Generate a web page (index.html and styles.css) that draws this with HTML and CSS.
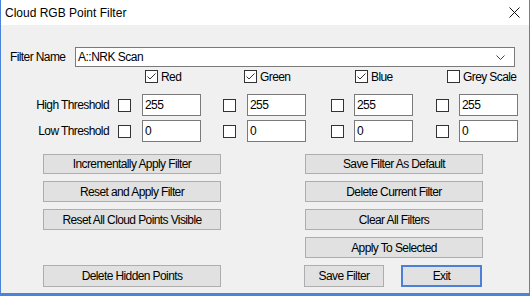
FILE: index.html
```html
<!DOCTYPE html>
<html lang="en">
<head>
    <meta charset="UTF-8">
    <title>Cloud RGB Point Filter</title>
    <link rel="stylesheet" href="styles.css">
</head>
<body>
    <div class="window">
        <!-- title bar -->
        <div class="titlebar">
            <span class="title">Cloud RGB Point Filter</span>
            <svg class="close" width="11" height="11" viewBox="0 0 11 11">
                <path d="M0.5 0.5 L10.5 10.5 M10.5 0.5 L0.5 10.5" stroke="#111" stroke-width="1" fill="none"/>
            </svg>
        </div>

        <div class="content">
            <!-- filter name -->
            <div class="name-row">
                <span class="name-label">Filter Name</span>
                <div class="combo">
                    <span>A::NRK Scan</span>
                    <svg width="9" height="5" viewBox="0 0 9 5">
                        <path d="M0.5 0.5 L4.5 4.5 L8.5 0.5" stroke="#444" stroke-width="1" fill="none"/>
                    </svg>
                </div>
            </div>

            <!-- channel checkboxes -->
            <div class="channels">
                <label class="channel ch-red"><span class="chk checked"><svg width="11" height="11" viewBox="0 0 11 11"><path d="M1.5 5.5 L4 8 L9.5 2.5" stroke="#333" stroke-width="1" fill="none"/></svg></span>Red</label>
                <label class="channel ch-green"><span class="chk checked"><svg width="11" height="11" viewBox="0 0 11 11"><path d="M1.5 5.5 L4 8 L9.5 2.5" stroke="#333" stroke-width="1" fill="none"/></svg></span>Green</label>
                <label class="channel ch-blue"><span class="chk checked"><svg width="11" height="11" viewBox="0 0 11 11"><path d="M1.5 5.5 L4 8 L9.5 2.5" stroke="#333" stroke-width="1" fill="none"/></svg></span>Blue</label>
                <label class="channel"><span class="chk"></span>Grey Scale</label>
            </div>

            <!-- thresholds -->
            <div class="thresholds">
                <span class="th-label">High Threshold</span>
                <span class="chk"></span><div class="field">255</div>
                <span class="chk"></span><div class="field">255</div>
                <span class="chk"></span><div class="field">255</div>
                <span class="chk"></span><div class="field">255</div>

                <span class="th-label">Low Threshold</span>
                <span class="chk"></span><div class="field">0</div>
                <span class="chk"></span><div class="field">0</div>
                <span class="chk"></span><div class="field">0</div>
                <span class="chk"></span><div class="field">0</div>
            </div>

            <!-- buttons -->
            <div class="buttons">
                <button class="btn">Incrementally Apply Filter</button>
                <button class="btn">Save Filter As Default</button>
                <button class="btn">Reset and Apply Filter</button>
                <button class="btn">Delete Current Filter</button>
                <button class="btn">Reset All Cloud Points Visible</button>
                <button class="btn">Clear All Filters</button>
                <span></span>
                <button class="btn">Apply To Selected</button>
                <button class="btn">Delete Hidden Points</button>
                <div class="bottom-pair">
                    <button class="btn btn-save">Save Filter</button>
                    <button class="btn btn-exit">Exit</button>
                </div>
            </div>
        </div>
    </div>
</body>
</html>
```

FILE: styles.css
```css
/* page */
body {
    margin: 0;
    font-family: 'Liberation Sans', Arial, sans-serif;
}

/* dialog frame */
.window {
    width: 530px;
    height: 296px;
    box-sizing: border-box;
    background-color: #f0f0f0;
    border: 1px solid #4a83d8;
    border-top: 0;
    border-bottom-width: 3px;
    overflow: hidden;
}

/* title bar */
.titlebar {
    height: 25px;
    background-color: #fff;
    display: flex;
    align-items: center;
    justify-content: space-between;
    padding: 0 9px 0 4px;
}

.title {
    font-size: 12px;
    color: #000;
}

/* main area */
.content {
    padding-top: 22px;
    font-size: 12px;
    letter-spacing: -0.6px;
    color: #000;
}

/* filter name */
.name-row {
    display: flex;
    align-items: center;
    padding-left: 9px;
}

.name-label {
    width: 65px;
}

.combo {
    width: 440px;
    height: 20px;
    box-sizing: border-box;
    border: 1px solid #7a7a7a;
    background-color: #fff;
    display: flex;
    align-items: center;
    justify-content: space-between;
    padding: 0 9px 0 2px;
    letter-spacing: -0.5px;
}

/* channel checkboxes */
.channels {
    display: flex;
    height: 13px;
    margin-top: 3px;
    padding-left: 144px;
}

.channel {
    display: flex;
    align-items: center;
    gap: 3px;
}

.ch-red { width: 99px; }
.ch-green { width: 111px; }
.ch-blue { width: 92px; }

/* checkbox */
.chk {
    width: 13px;
    height: 13px;
    box-sizing: border-box;
    border: 1px solid #333;
    background-color: #fff;
    display: block;
}

.chk svg {
    display: block;
}

/* thresholds grid */
.thresholds {
    display: grid;
    grid-template-columns: 117px 24px 81px 24px 84px 23px 82px 23px 59px;
    grid-auto-rows: 22px;
    row-gap: 4px;
    align-items: center;
    margin-top: 11px;
}

.th-label {
    text-align: right;
    padding-right: 9px;
}

.field {
    width: 59px;
    height: 22px;
    box-sizing: border-box;
    border: 1px solid #7a7a7a;
    background-color: #fff;
    padding: 2px 2px;
    line-height: 16px;
}

/* buttons */
.buttons {
    display: grid;
    grid-template-columns: 178px 178px;
    grid-template-rows: 20px 21px 21px 21px 22px;
    column-gap: 84px;
    row-gap: 7px;
    padding-left: 42px;
    margin-top: 12px;
}

.btn {
    height: 100%;
    box-sizing: border-box;
    border: 1px solid #adadad;
    background-color: #e1e1e1;
    font-family: 'Liberation Sans', Arial, sans-serif;
    font-size: 12px;
    letter-spacing: -0.6px;
    color: #000;
    padding: 0;
}

.bottom-pair {
    display: flex;
    gap: 17px;
    margin-left: -1px;
}

.btn-save {
    width: 80px;
}

.btn-exit {
    width: 81px;
    border: 2px solid #4a80d8;
}
```
